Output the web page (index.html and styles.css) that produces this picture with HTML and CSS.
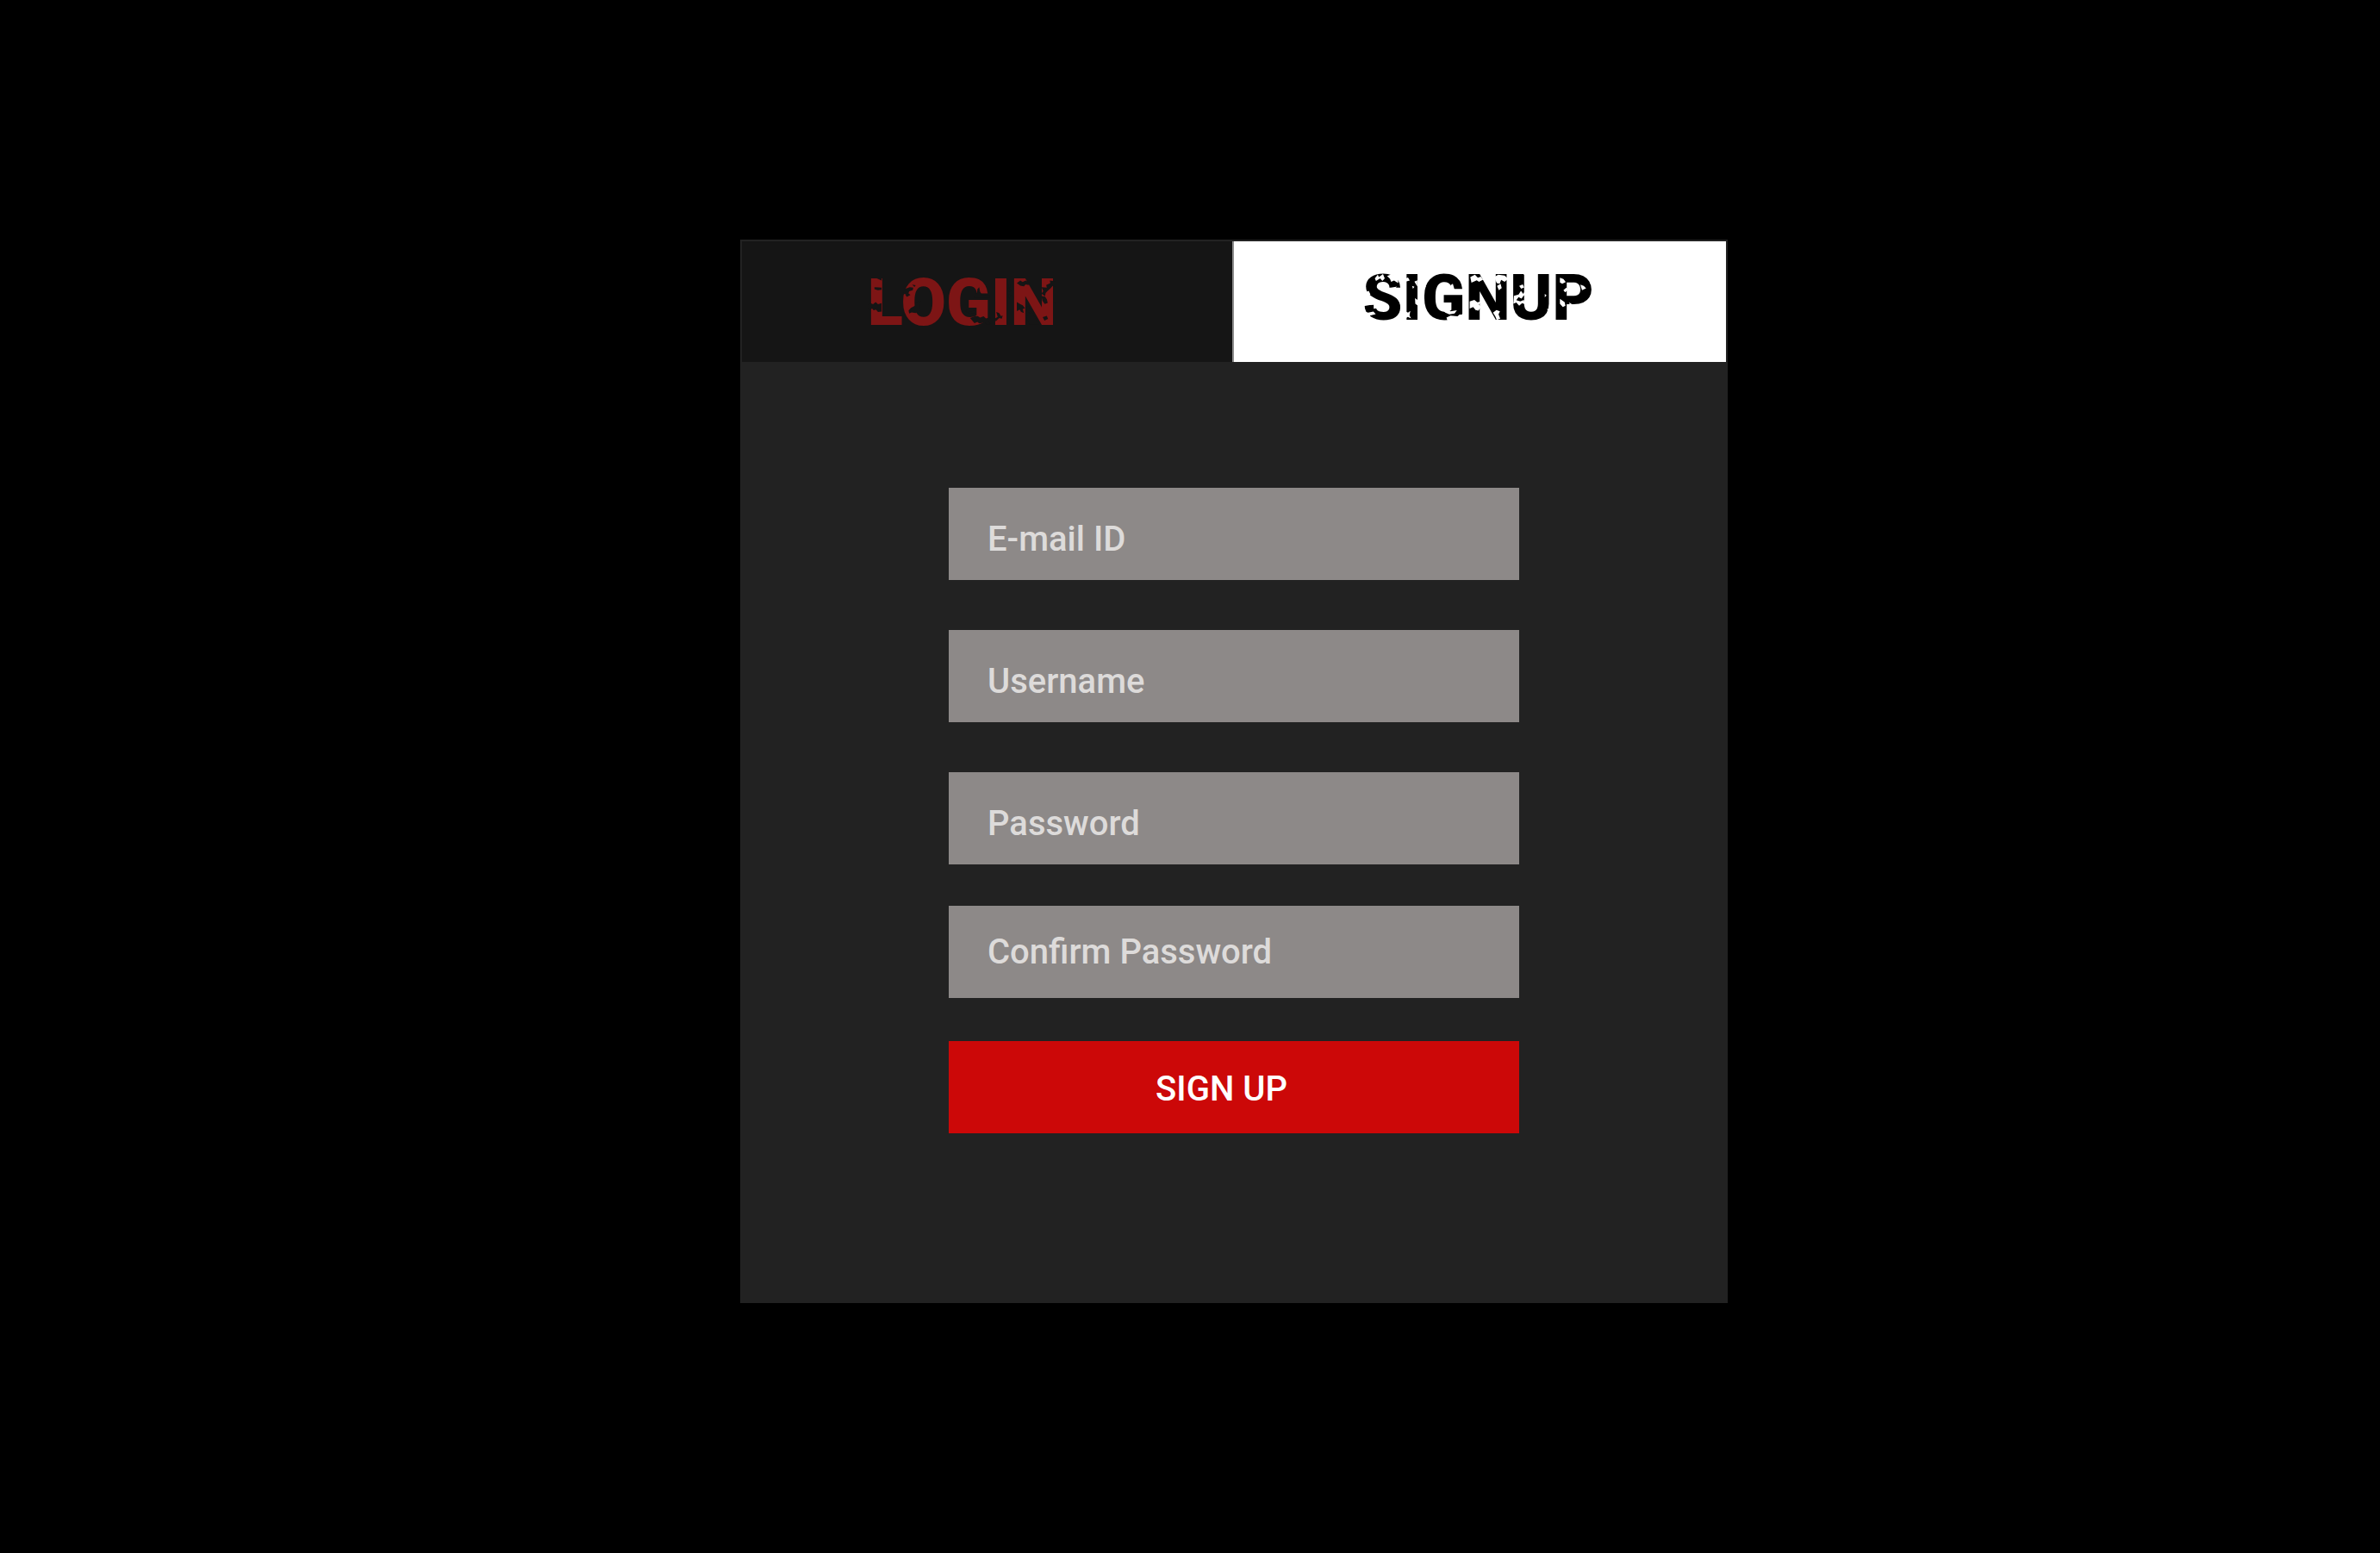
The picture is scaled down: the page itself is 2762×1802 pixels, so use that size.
FILE: index.html
```html
<!DOCTYPE html>
<html lang="en">
<head>
  <meta charset="utf-8">
  <meta name="viewport" content="width=device-width, initial-scale=1">
  <title>Sign up</title>
  <link rel="stylesheet" href="styles.css">
</head>
<body>
  <main class="page">
    <section class="card">
      <div class="tabs" role="tablist">
        <button class="tab tab-login" type="button" role="tab" aria-selected="false">
          <span class="tab-label">LOGIN
            <svg class="wear" viewBox="57 60 643 180" preserveAspectRatio="none" aria-hidden="true">
              <path d="M57 162l10-6 8 4 9-8 8 8 12-4v32l-12 2-7-9-8 2-5-6-8 4-7-8zM80 94l24 2v8l-12 2-12-4zM88 60l16 0v8z"/>
              <path d="M182 102l18-8 12 2-2 10-12 4-3 9-16 2zM184 122l12-4 6 6-12 8zM196 184l8-10 14-8 4-14 14-4-2 38-14 8-14-2-8 4zM208 84l12 3-4 6z"/>
              <path d="M430 102l6-8 3 18 8 14h26v8h-54l2-12 8-6zM388 186l12-6 6 8 14-3 4 8-22 4zM405 213l16-6 10-1 8 6 12-5 8 8 14-4 3 6-8 8 6 12-12 2-8-8-18 3-6-6-10 5z"/>
              <path d="M494 190l10 4 6 12 6-2-3 12-9-3-12 14-2-12 9-6zM538 80l6 8-5 10 5 10-6 6-4-12zM536 120l8 6-6 12z"/>
              <path d="M564 78l12-10 8 6 10-6 12 8-2 10-10-3-6 8-12-3zM564 152l12 8 8 4 8 12-8 2 4 16-10-5-4-8-10 6zM594 172l10-4 8 16-6 10-8-5zM606 196l10-4 22 46h-30l-12-24zM648 94l18 2-2-10 14-8-2-10 22 4v20l-12-3-8 10-10 10-6 8-2 12-12-10 6-10zM648 128l12 3 6 10 3 14-10 4-8-12zM652 210l14-5 4 12-12 6zM690 150l8 4v8z"/>
            </svg>
          </span>
        </button>
        <button class="tab tab-signup" type="button" role="tab" aria-selected="true">
          <span class="tab-label">SIGNUP
            <svg class="wear" viewBox="65 60 795 150" preserveAspectRatio="none" aria-hidden="true">
              <path d="M65 58h24l-5 12-14 10zM108 74l10-12 4 8 14-10 6 14-8 8-8-8-14 8zM150 66l16-5 22 12v16l-14-8-10 4-4-10zM65 112l12 6 10-4 6 12-20 5zM65 140l24 4 14 14-38 6zM104 158l22-6 20 8 8 10-16 4-14-5-20 3zM65 178l20 6 18-3 8 8-20 5 6 10-4 8h-28zM156 106l28-6-8 8 6 10z"/>
              <path d="M208 76l14-5 6 10-20 5zM244 84l10-4v20zM208 178l14 6 8-5-3 14 6 10-12-5-13 8zM236 98l8 3-5 6zM246 138l10 6v18l-9-6z"/>
              <path d="M368 96l8-5 6 20 32 8v8h-40l-3-10zM340 176l18-4 10 8 22-3-8 10-18 3-14-6zM354 200l14-6 24 2 8-6 14 4-8 12-12 6h-36zM276 96l8 4-8 8z"/>
              <path d="M436 70l16-8 10 10 10-4 8 10-14 7-8-5-18 8zM434 148l16-5 10 8 14-3-8 10 6 8-8 12-10-2-8-10-12 5zM478 172l12-5 8 12-4 12-12-4zM518 70l14-8 22 3 12 10-12 10-12-6-5 12-10-2zM528 98l12-7 4 14-10 7zM514 184l12-8 12 4-5 10 6 14-12 4-5-12z"/>
              <path d="M586 130l16-4 8-12 8 10 6-10 10 6-4 12-10-3-8 10-10-5-8 10 14 4 12-5 4 14-10-3-10 8-10-10-10 4zM604 98l12-5 5 10-10 4zM692 124l6 5-6 6zM618 60l20 2-8 8zM700 172l10 2-6 10z"/>
              <path d="M744 72l12 4 8 10-12 5-8-4zM744 140l16 10 3 12-9 4-10-10zM756 112l10-8 6 7-10 8zM780 100l8-5 5 9-8 4zM814 94l12 4 8 8-14 6zM846 80l12 8-8 7zM776 152l8 4-5 8z"/>
            </svg>
          </span>
        </button>
      </div>
      <form class="form">
        <div class="fields">
          <input class="field" type="email" placeholder="E-mail ID" aria-label="E-mail ID">
          <input class="field" type="text" placeholder="Username" aria-label="Username">
          <input class="field" type="password" placeholder="Password" aria-label="Password">
        </div>
        <input class="field field-confirm" type="password" placeholder="Confirm Password" aria-label="Confirm Password">
        <button class="submit" type="submit">SIGN UP</button>
      </form>
    </section>
  </main>
</body>
</html>
```
FILE: styles.css
```css
* {
  box-sizing: border-box;
}

body {
  margin: 0;
  background: #000;
  font-family: Roboto, sans-serif;
}

.page {
  display: flex;
  justify-content: center;
  min-height: 100vh;
  padding: 278px 0 64px 102px;
  align-items: flex-start;
}

.card {
  width: 100%;
  max-width: 1146px;
  border: 2px solid #222;
  background: #222;
}

.tabs {
  display: grid;
  grid-template-columns: 1fr 1fr;
  height: 140px;
}

.tab {
  display: flex;
  justify-content: center;
  align-items: flex-start;
  border: 0;
  font-family: inherit;
  font-weight: 900;
  line-height: 80px;
}

.tab-login {
  padding: 31px 58px 0 0;
  border-right: 2px solid #8b8b8b;
  background: #151515;
  color: #7d1515;
  font-size: 76px;
}

.tab-signup {
  padding: 26px 4px 0 0;
  background: #fff;
  color: #000;
  font-size: 74px;
}

.tab-label {
  position: relative;
}

/* Worn patches in the tab's own colour, laid over the lettering */
.wear {
  position: absolute;
  top: 12px;
  left: 0;
  width: 100%;
  height: 54px;
}

.tab-login .wear {
  fill: #151515;
}

.tab-signup .wear {
  fill: #fff;
}

.form {
  display: flex;
  flex-direction: column;
  max-width: 662px;
  margin: 0 auto;
  padding: 146px 0 195px;
}

.fields {
  display: flex;
  flex-direction: column;
  gap: 58px;
  margin-bottom: 48px;
}

.field,
.submit {
  width: 100%;
  height: 107px;
  border: 0;
  border-radius: 0;
  font-family: inherit;
  font-size: 40px;
  font-weight: 500;
}

.field {
  padding: 12px 45px 0;
  background: #8d8988;
  color: #dddbda;
}

.field-confirm {
  padding-top: 0;
  margin-bottom: 50px;
}

.field::placeholder {
  color: #dddbda;
  opacity: 1;
}

.submit {
  padding: 3px 29px 0 0;
  background: #cc0808;
  color: #fff;
}
```
